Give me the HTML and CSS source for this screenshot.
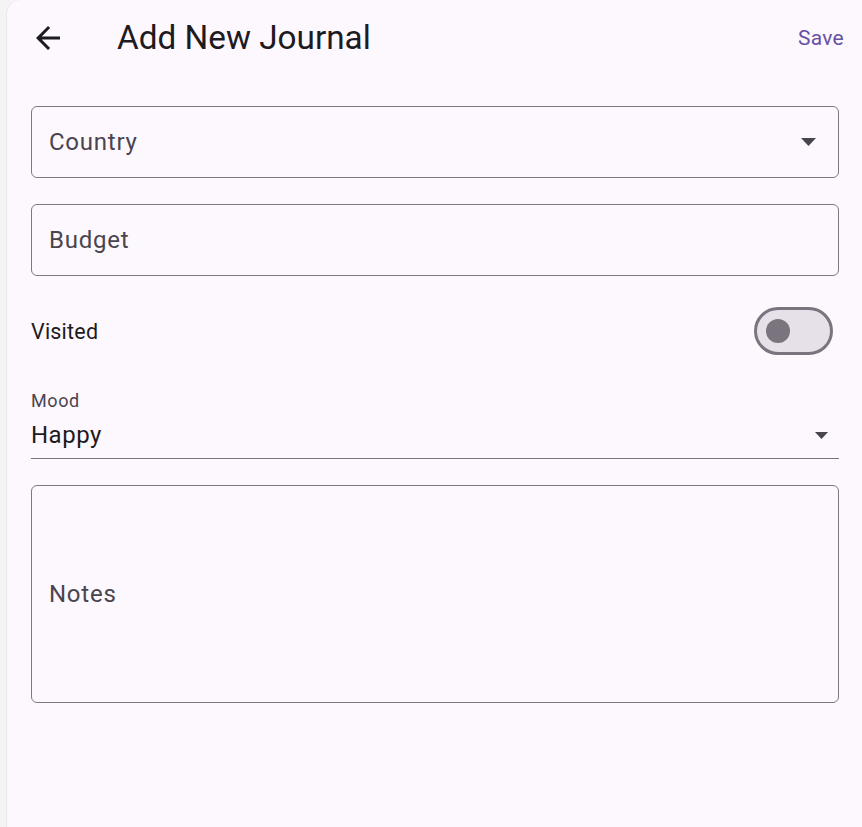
FILE: index.html
```html
<!DOCTYPE html>
<html lang="en">
<head>
<meta charset="utf-8">
<title>Add New Journal</title>
<link rel="stylesheet" href="styles.css">
</head>
<body>
<div class="app">
  <div class="rail"></div>
  <main class="panel">
    <header class="appbar">
      <button class="back" aria-label="Back">
        <svg viewBox="0 0 24 24" width="36" height="36"><path d="M20 11H7.83l5.59-5.59L12 4l-8 8 8 8 1.41-1.41L7.83 13H20v-2z"/></svg>
      </button>
      <h1 class="title">Add New Journal</h1>
      <button class="save">Save</button>
    </header>
    <form class="form">
      <div class="field field-select">
        <span class="field-label">Country</span>
        <svg class="caret caret-country" viewBox="0 0 15 8" width="15" height="8"><path d="M0 0h15L7.5 8z"/></svg>
      </div>
      <div class="field field-budget">
        <span class="field-label">Budget</span>
      </div>
      <div class="switch-row">
        <span class="switch-label">Visited</span>
        <span class="switch"><span class="thumb"></span></span>
      </div>
      <div class="dropdown">
        <div class="dropdown-label">Mood</div>
        <div class="dropdown-value">
          <span>Happy</span>
          <svg class="caret caret-mood" viewBox="0 0 15 8" width="15" height="7"><path d="M0 0h15L7.5 8z"/></svg>
        </div>
      </div>
      <div class="field field-notes">
        <span class="field-label">Notes</span>
      </div>
    </form>
  </main>
</div>
</body>
</html>
```

FILE: styles.css
```css
* { box-sizing: border-box; }

html, body {
  margin: 0;
  padding: 0;
  height: 100%;
}

body {
  font-family: Roboto, "Noto Sans", sans-serif;
  color: #1d1b20;
  background: #f4f4f4;
}

.app {
  display: flex;
  min-height: 100vh;
}

.rail {
  width: 7px;
  flex: none;
  background: #f4f4f4;
}

.panel {
  flex: 1;
  background: #fdf7fe;
  border-top-left-radius: 14px;
  box-shadow: -1px 0 0 #ebe8ec;
}

.appbar {
  height: 76px;
  display: flex;
  align-items: center;
}

.back {
  width: 36px;
  height: 36px;
  margin-left: 23px;
  padding: 0;
  border: 0;
  background: none;
  display: flex;
  fill: #1d1b20;
}

.title {
  margin: 0 0 0 51px;
  font-size: 33.3px;
  font-weight: 400;
  line-height: 40px;
  color: #1d1b20;
}

.save {
  margin-left: auto;
  margin-right: 18px;
  padding: 0;
  border: 0;
  background: none;
  font-family: Roboto, sans-serif;
  font-size: 21px;
  font-weight: 400;
  letter-spacing: 0.3px;
  color: #6552a3;
}

.form {
  padding: 30px 23px 0 24px;
  display: flex;
  flex-direction: column;
}

.field {
  height: 72px;
  border: 1px solid #7d7883;
  border-radius: 6px;
  display: flex;
  align-items: center;
  padding: 0 22px 0 17px;
}

.field-budget {
  margin-top: 26px;
}

.field-notes {
  height: 218px;
  margin-top: 26px;
}

.field-label {
  font-size: 24px;
  letter-spacing: 0.75px;
  color: #49454f;
  line-height: 32px;
}

.caret {
  margin-left: auto;
  fill: #49454f;
  display: block;
}

.switch-row {
  margin-top: 31px;
  height: 48px;
  display: flex;
  align-items: center;
}

.switch-label {
  font-size: 21.5px;
  letter-spacing: 0.2px;
  color: #1d1b20;
}

.switch {
  margin-left: auto;
  margin-right: 6px;
  width: 79px;
  height: 48px;
  border: 3px solid #79747e;
  border-radius: 24px;
  background: #e6e0e9;
  display: flex;
  align-items: center;
  padding-left: 9px;
}

.thumb {
  width: 24px;
  height: 24px;
  border-radius: 50%;
  background: #79747e;
}

.dropdown {
  margin-top: 34px;
  border-bottom: 1px solid #79747e;
  padding-bottom: 7px;
}

.dropdown-label {
  font-size: 18px;
  line-height: 24px;
  letter-spacing: 0.6px;
  color: #49454f;
}

.dropdown-value {
  margin-top: 6px;
  height: 32px;
  display: flex;
  align-items: center;
  padding-right: 10px;
  font-size: 24px;
  letter-spacing: 0.5px;
  color: #1d1b20;
}
```
